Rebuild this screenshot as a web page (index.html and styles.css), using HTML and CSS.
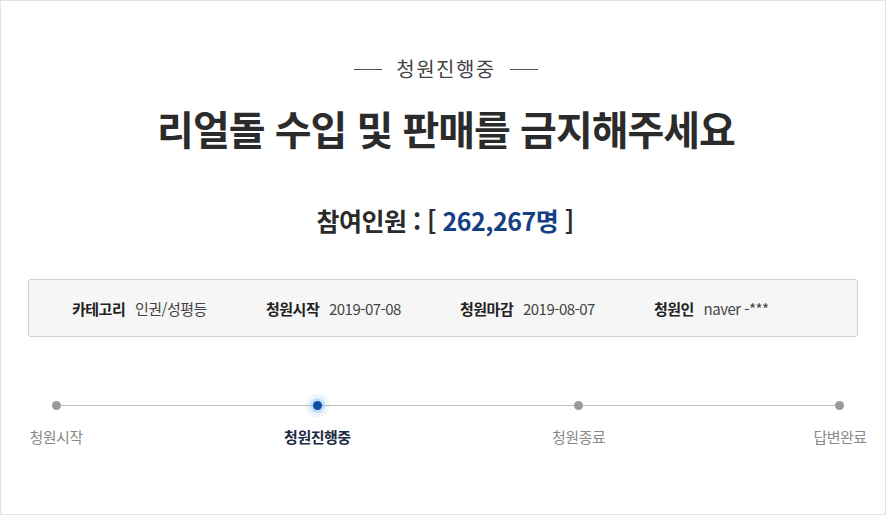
FILE: index.html
```html
<!DOCTYPE html>
<html lang="ko">
<head>
    <meta charset="UTF-8">
    <meta name="viewport" content="width=device-width, initial-scale=1.0">
    <title>청원 상세</title>
    <link rel="stylesheet" href="styles.css">
</head>
<body>
<div class="petition">
    <div class="status-label">
        <span class="dash"></span>
        <span>청원진행중</span>
        <span class="dash"></span>
    </div>

    <h1 class="title">리얼돌 수입 및 판매를 금지해주세요</h1>

    <h2 class="count">참여인원 : [ <span class="count-num">262,267명</span> ]</h2>

    <ul class="info">
        <li><strong>카테고리</strong> 인권/성평등</li>
        <li><strong>청원시작</strong> 2019-07-08</li>
        <li><strong>청원마감</strong> 2019-08-07</li>
        <li><strong>청원인</strong> naver -***</li>
    </ul>

    <ol class="steps">
        <li class="step"><span class="dot"></span>청원시작</li>
        <li class="step active"><span class="dot"></span>청원진행중</li>
        <li class="step"><span class="dot"></span>청원종료</li>
        <li class="step"><span class="dot"></span>답변완료</li>
    </ol>
</div>
</body>
</html>
```

FILE: styles.css
```css
html, body {
    margin: 0;
    padding: 0;
    background: #fff;
}
body {
    font-family: "Noto Sans CJK KR", "Noto Sans", sans-serif;
    color: #333;
}
.petition {
    box-sizing: border-box;
    width: 886px;
    height: 515px;
    border: 1px solid #e3e3e3;
    padding: 54px 27px 0 27px;
}
.status-label {
    display: flex;
    justify-content: center;
    align-items: center;
    gap: 14px;
    padding-left: 6px;
    font-size: 20px;
    line-height: 28px;
    letter-spacing: 1.5px;
    color: #444;
}
.dash {
    display: block;
    width: 28px;
    height: 1px;
    background: #555;
}
.title {
    margin: 16px 0 0;
    padding-left: 6px;
    text-align: center;
    font-size: 40px;
    line-height: 58px;
    font-weight: bold;
    letter-spacing: -1px;
    color: #2b2b2b;
}
.count {
    margin: 46px 0 0;
    padding-left: 4px;
    text-align: center;
    font-size: 25px;
    line-height: 34px;
    font-weight: bold;
    letter-spacing: -0.5px;
    color: #2b2b2b;
}
.count-num {
    color: #163f84;
}
.info {
    list-style: none;
    margin: 42px 0 0;
    padding: 0 0 0 43px;
    height: 56px;
    display: grid;
    grid-template-columns: repeat(4, 194px);
    align-items: center;
    background: #f6f6f6;
    border: 1px solid #cfcfcf;
    border-radius: 3px;
    font-size: 15px;
    letter-spacing: -0.5px;
    color: #444;
}
.info strong {
    margin-right: 6px;
    color: #222;
}
.steps {
    position: relative;
    list-style: none;
    margin: 60px -10px 0 0;
    padding: 0;
    display: flex;
    justify-content: space-between;
}
.steps::before {
    content: "";
    position: absolute;
    left: 28px;
    right: 28px;
    top: 8px;
    height: 1px;
    background: #bdbdbd;
}
.step {
    position: relative;
    width: 56px;
    display: flex;
    flex-direction: column;
    align-items: center;
    white-space: nowrap;
    font-size: 15px;
    letter-spacing: -0.5px;
    color: #8a8a8a;
}
.dot {
    width: 9px;
    height: 9px;
    margin: 4px 0 16px;
    border-radius: 50%;
    background: #9a9a9a;
}
.step.active {
    font-weight: bold;
    color: #1d2a44;
}
.step.active .dot {
    background: #0b4ea2;
    box-shadow: 0 0 0 3px rgba(120, 180, 240, 0.35), 0 0 0 7px rgba(150, 200, 245, 0.18);
}
```
